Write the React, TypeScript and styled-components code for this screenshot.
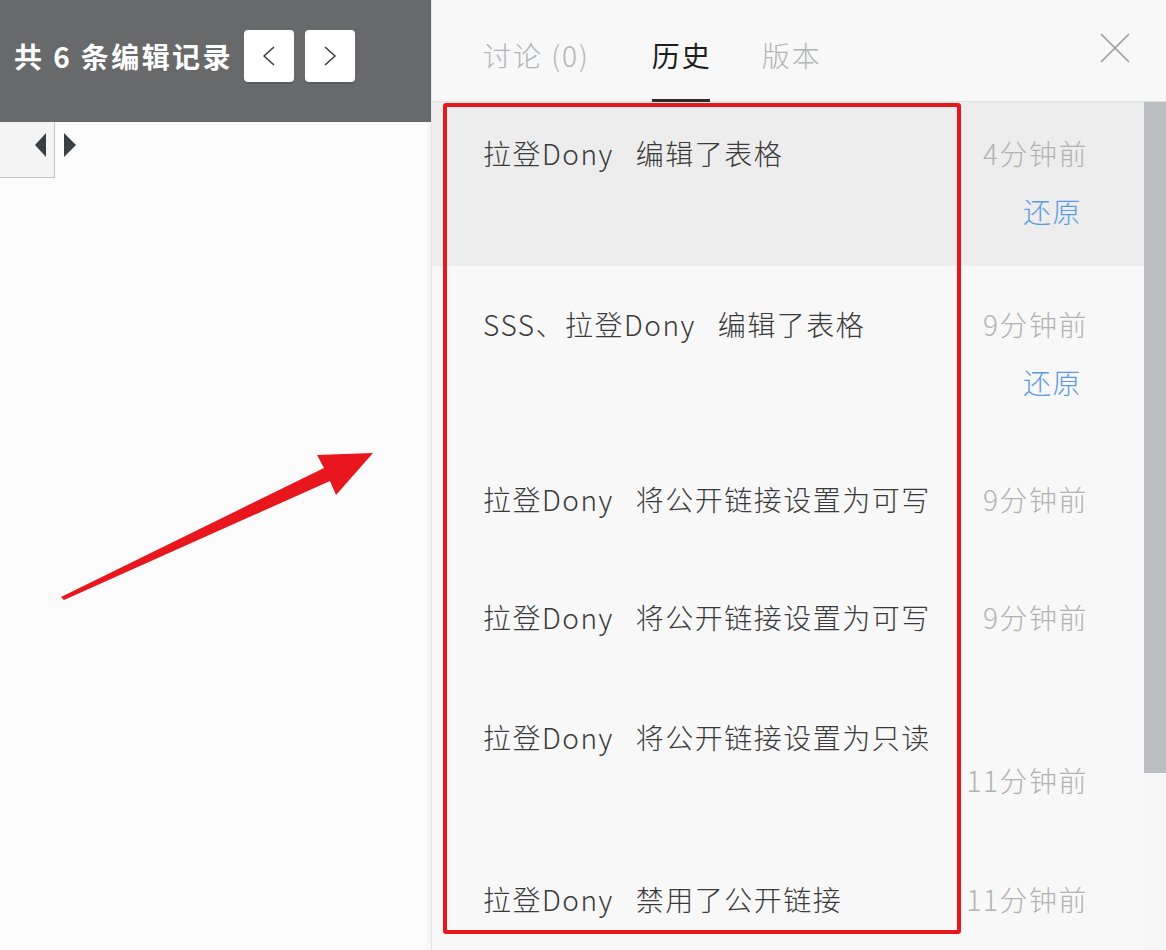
import styled, { createGlobalStyle } from "styled-components";

const GlobalStyle = createGlobalStyle`
   html, body {
      margin: 0;
      padding: 0;
      background: #fbfbfb;
   }
   * {
      box-sizing: border-box;
   }
`;

const FONT = `"Noto Sans CJK SC", "Noto Sans", sans-serif`;

const Page = styled.div`
   position: relative;
   display: flex;
   width: 1166px;
   height: 950px;
   overflow: hidden;
   font-family: ${FONT};
`;

const LeftPane = styled.div`
   width: 431px;
   display: flex;
   flex-direction: column;
   background: #fbfbfb;
`;

const RecordBar = styled.div`
   height: 122px;
   background: #68696b;
   display: flex;
   align-items: flex-start;
   padding: 30px 0 0 14px;
`;

const RecordTitle = styled.h1`
   margin: 0 11px 0 0;
   height: 52px;
   line-height: 52px;
   font-size: 28px;
   font-weight: 700;
   color: #ffffff;
   letter-spacing: 2.4px;
   white-space: pre;
`;

const NavButton = styled.button`
   width: 50px;
   height: 52px;
   margin-right: 11px;
   border: none;
   border-radius: 4px;
   background: #ffffff;
   box-shadow: 0 2px 0 rgba(0, 0, 0, 0.12);
   display: flex;
   align-items: center;
   justify-content: center;
   padding: 0;
`;

const SheetArea = styled.div`
   flex: 1;
   display: flex;
   align-items: flex-start;
`;

const ScrollStub = styled.div`
   width: 55px;
   height: 56px;
   background: #f4f4f4;
   border-right: 1px solid #c6c6c6;
   border-bottom: 1px solid #c6c6c6;
   position: relative;
`;

const Triangle = styled.div<{ $dir: "left" | "right" }>`
   position: absolute;
   top: 11px;
   width: 0;
   height: 0;
   border-top: 12px solid transparent;
   border-bottom: 12px solid transparent;
   ${({ $dir }) =>
      $dir === "left"
         ? `left: 35px; border-right: 11px solid #3b3f42;`
         : `left: 64px; border-left: 12px solid #3b3f42;`}
`;

const RightPane = styled.div`
   flex: 1;
   display: flex;
   flex-direction: column;
   background: #f8f8f9;
   border-left: 1px solid #e6e6e7;
   box-shadow: -3px 0 4px rgba(0, 0, 0, 0.03);
`;

const TabBar = styled.div`
   height: 102px;
   display: flex;
   align-items: stretch;
   padding-left: 51px;
   border-bottom: 1px solid #e1e1e2;
   position: relative;
`;

const Tab = styled.div<{ $active?: boolean }>`
   position: relative;
   display: flex;
   align-items: center;
   padding-top: 8px;
   margin-right: ${({ $active }) => ($active ? "50px" : "62px")};
   font-size: 28px;
   font-weight: ${({ $active }) => ($active ? 400 : 300)};
   color: ${({ $active }) => ($active ? "#1f1f1f" : "#b3b4b6")};
   letter-spacing: 2px;
   &::after {
      content: "";
      display: ${({ $active }) => ($active ? "block" : "none")};
      position: absolute;
      left: 0;
      right: 2px;
      bottom: -1px;
      height: 3px;
      background: #332a2c;
   }
`;

const CloseButton = styled.div`
   margin-left: auto;
   width: 32px;
   height: 32px;
   margin-top: 32px;
   margin-right: 35px;
`;

const ListArea = styled.div`
   flex: 1;
   display: flex;
`;

const List = styled.div`
   flex: 1;
   display: flex;
   flex-direction: column;
`;

const Row = styled.div<{ $height: number; $active?: boolean; $pad: number }>`
   height: ${({ $height }) => $height}px;
   padding: ${({ $pad }) => $pad}px 56px 0 51px;
   display: flex;
   align-items: flex-start;
   background: ${({ $active }) => ($active ? "#ededee" : "transparent")};
`;

const Entry = styled.div`
   flex: 1;
   font-size: 28px;
   font-weight: 300;
   line-height: 36px;
   letter-spacing: 1.5px;
   color: #3a3a3a;
   white-space: nowrap;
`;

const Action = styled.span`
   margin-left: 22px;
`;

const Meta = styled.div<{ $drop?: boolean }>`
   display: flex;
   flex-direction: column;
   align-items: flex-end;
   margin-top: ${({ $drop }) => ($drop ? "43px" : "0")};
`;

const Time = styled.span`
   font-size: 28px;
   font-weight: 300;
   line-height: 36px;
   color: #b2b2b4;
   letter-spacing: 1.5px;
   white-space: nowrap;
`;

const Restore = styled.a`
   margin-top: 22px;
   margin-right: 6px;
   font-size: 28px;
   font-weight: 300;
   line-height: 36px;
   color: #5b9be3;
   letter-spacing: 1.5px;
`;

const ScrollTrack = styled.div`
   width: 22px;
   background: #f6f6f7;
`;

const ScrollThumb = styled.div`
   height: 671px;
   background: #bdbec1;
`;

const Highlight = styled.div`
   position: absolute;
   left: 443px;
   top: 103px;
   width: 518px;
   height: 831px;
   border: 4px solid #e8161d;
   border-radius: 3px;
   pointer-events: none;
`;

const Overlay = styled.svg`
   position: absolute;
   left: 0;
   top: 0;
   pointer-events: none;
`;

type Record = {
   who: string;
   action: string;
   time: string;
   restore?: boolean;
   active?: boolean;
   drop?: boolean;
   height: number;
   pad: number;
};

const records: Record[] = [
   { who: "拉登Dony", action: "编辑了表格", time: "4分钟前", restore: true, active: true, height: 164, pad: 33 },
   { who: "SSS、拉登Dony", action: "编辑了表格", time: "9分钟前", restore: true, height: 175, pad: 40 },
   { who: "拉登Dony", action: "将公开链接设置为可写", time: "9分钟前", height: 118, pad: 40 },
   { who: "拉登Dony", action: "将公开链接设置为可写", time: "9分钟前", height: 120, pad: 40 },
   { who: "拉登Dony", action: "将公开链接设置为只读", time: "11分钟前", drop: true, height: 162, pad: 40 },
   { who: "拉登Dony", action: "禁用了公开链接", time: "11分钟前", height: 109, pad: 40 },
];

function Chevron({ dir }: { dir: "left" | "right" }) {
   return (
      <svg width="14" height="20" viewBox="0 0 14 20">
         <path
            d={dir === "left" ? "M12 1 L2 10 L12 19" : "M2 1 L12 10 L2 19"}
            fill="none"
            stroke="#333"
            strokeWidth="1.4"
         />
      </svg>
   );
}

function App() {
   return (
      <Page>
         <GlobalStyle />
         <LeftPane>
            <RecordBar>
               <RecordTitle>共 6 条编辑记录</RecordTitle>
               <NavButton>
                  <Chevron dir="left" />
               </NavButton>
               <NavButton>
                  <Chevron dir="right" />
               </NavButton>
            </RecordBar>
            <SheetArea>
               <ScrollStub>
                  <Triangle $dir="left" />
               </ScrollStub>
               <Triangle $dir="right" style={{ top: 133 }} />
            </SheetArea>
         </LeftPane>
         <RightPane>
            <TabBar>
               <Tab>讨论 (0)</Tab>
               <Tab $active>历史</Tab>
               <Tab>版本</Tab>
               <CloseButton>
                  <svg width="32" height="32" viewBox="0 0 32 32">
                     <path d="M2 2 L30 30 M30 2 L2 30" stroke="#9a9a9c" strokeWidth="1.6" />
                  </svg>
               </CloseButton>
            </TabBar>
            <ListArea>
               <List>
                  {records.map((r, i) => (
                     <Row key={i} $height={r.height} $pad={r.pad} $active={r.active}>
                        <Entry>
                           {r.who}
                           <Action>{r.action}</Action>
                        </Entry>
                        <Meta $drop={r.drop}>
                           <Time>{r.time}</Time>
                           {r.restore && <Restore>还原</Restore>}
                        </Meta>
                     </Row>
                  ))}
               </List>
               <ScrollTrack>
                  <ScrollThumb />
               </ScrollTrack>
            </ListArea>
         </RightPane>
         <Highlight />
         <Overlay width="1166" height="950" viewBox="0 0 1166 950">
            <polygon
               points="61,597 324,468 317,455 373,453 336,495 330,481 64,600"
               fill="#e8161d"
            />
         </Overlay>
      </Page>
   );
}

export default App;
